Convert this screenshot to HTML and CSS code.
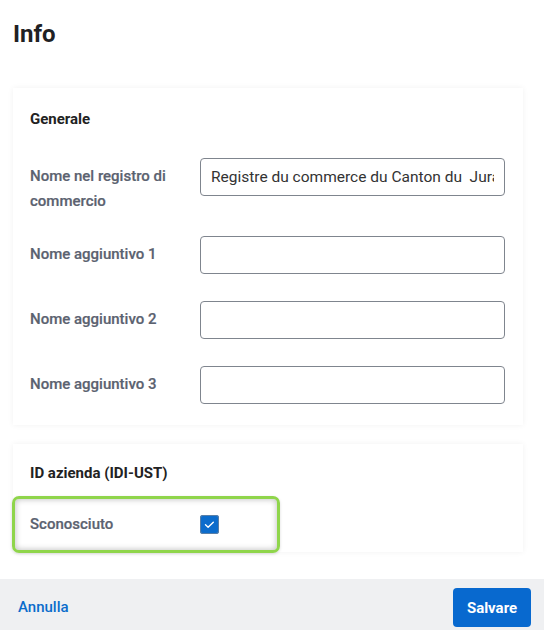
FILE: index.html
```html
<!DOCTYPE html>
<html lang="it">
<head>
<meta charset="UTF-8" />
<meta name="viewport" content="width=device-width, initial-scale=1" />
<title>Info</title>
<link rel="stylesheet" href="styles.css">
</head>
<body>
<div class="page">
  <main class="content">
    <h1 class="page-title">Info</h1>

    <section class="card">
      <h2 class="card-title">Generale</h2>
      <div class="form-row row-first">
        <label class="form-label">Nome nel registro di commercio</label>
        <input class="form-input" type="text" value="Registre du commerce du Canton du  Jura">
      </div>
      <div class="form-row">
        <label class="form-label">Nome aggiuntivo 1</label>
        <input class="form-input" type="text">
      </div>
      <div class="form-row">
        <label class="form-label">Nome aggiuntivo 2</label>
        <input class="form-input" type="text">
      </div>
      <div class="form-row">
        <label class="form-label">Nome aggiuntivo 3</label>
        <input class="form-input" type="text">
      </div>
    </section>

    <section class="card card-id">
      <h2 class="card-title">ID azienda (IDI-UST)</h2>
      <div class="form-row check-row">
        <label class="form-label">Sconosciuto</label>
        <span class="checkbox">
          <svg width="19" height="19" viewBox="0 0 19 19"><path d="M5.5 9.8l2.6 2.4 5.2-5" fill="none" stroke="#fff" stroke-width="1.4" stroke-linecap="round" stroke-linejoin="round"/></svg>
        </span>
      </div>
      <div class="highlight"></div>
    </section>
  </main>

  <footer class="footer">
    <a class="link-cancel" href="#">Annulla</a>
    <button class="btn-save">Salvare</button>
  </footer>
</div>
</body>
</html>
```

FILE: styles.css
```css
body, html {
  margin: 0; padding: 0; font-family: Roboto, "Liberation Sans", sans-serif;
  background: #fff; color: #222;
}
.page {
  width: 544px; height: 630px; display: flex; flex-direction: column; overflow: hidden;
}
.content {
  flex-grow: 1; padding: 0 21px 0 13px;
}
.page-title {
  margin: 20px 0 0; font-size: 24px; line-height: 28px; font-weight: 700; color: #1f2124;
}
.card {
  position: relative; background: #fff; margin-top: 40px;
  box-shadow: 0 0 6px rgba(0,0,0,0.06);
  padding: 21px 18px 21px 17px;
}
.card-title {
  margin: 0 0 29px; font-size: 15px; line-height: 20px; font-weight: 700; color: #222;
}
.form-row {
  display: grid; grid-template-columns: 170px 1fr; align-items: start;
  margin-bottom: 27px;
}
.form-row.row-first {
  margin-bottom: 28px;
}
.form-row:last-child {
  margin-bottom: 0;
}
.form-label {
  font-size: 15px; line-height: 25px; font-weight: 500; color: #5b6270;
  padding-top: 6px; margin-bottom: -6px;
  -webkit-text-stroke: 0.2px #5b6270;
}
.form-input {
  box-sizing: border-box; height: 38px; width: 100%; margin: 0;
  border: 1px solid #7f858e; border-radius: 4px; padding: 0 10px;
  font-family: inherit; font-size: 15.5px; color: #333; background: #fff;
}
.card-id {
  margin-top: 19px; padding-top: 19px; padding-bottom: 9px;
}
.card-id .card-title {
  margin-bottom: 22px;
}
.card-id .check-row {
  height: 38px; align-items: center; margin-bottom: 0;
}
.check-row .form-label {
  padding-top: 0; margin-bottom: 0;
}
.checkbox {
  display: flex; width: 19px; height: 19px; background: #0c6ccc;
  border-radius: 3px; box-shadow: 0 0 0 1px #5a7fa6 inset;
}
.highlight {
  position: absolute; left: -1px; top: 52px; width: 262px; height: 51px;
  border: 3px solid #8fd54b; border-radius: 7px;
  box-shadow: inset 0 0 6px rgba(0,0,0,0.28), 0 1px 3px rgba(0,0,0,0.15);
  pointer-events: none;
}
.footer {
  height: 51px; background: #eff0f2; display: flex; align-items: flex-start;
  justify-content: space-between; padding: 9px 13px 0 18px; box-sizing: border-box;
}
.link-cancel {
  color: #0a6ccb; text-decoration: none; font-size: 15px; font-weight: 500;
  line-height: 39px;
}
.btn-save {
  height: 39px; width: 78px; background: #0869cf; color: #fff; border: none;
  border-radius: 4px; font-family: inherit; font-size: 15px; font-weight: 700;
  cursor: pointer;
}
```
